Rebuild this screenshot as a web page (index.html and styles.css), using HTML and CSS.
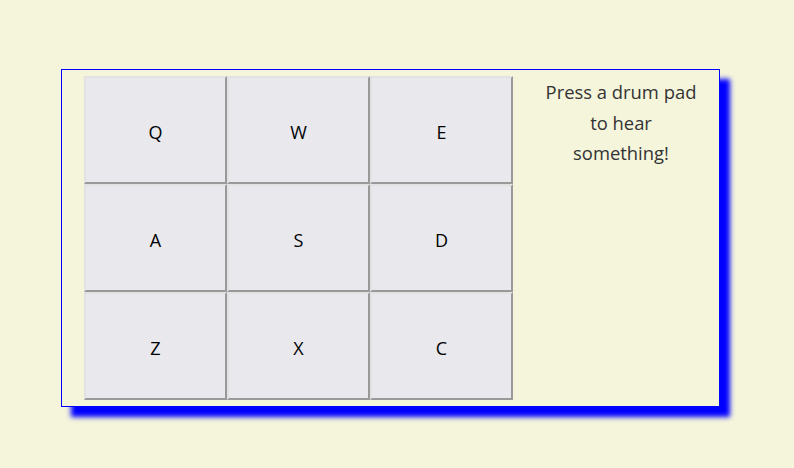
FILE: index.html
```html
<!DOCTYPE html>
<html>
<head>
<meta charset="utf-8">
<link rel="stylesheet" href="styles.css">
</head>
<body>
<div class="machine">
  <div class="pads">
    <button class="pad">Q</button>
    <button class="pad">W</button>
    <button class="pad">E</button>
    <button class="pad">A</button>
    <button class="pad">S</button>
    <button class="pad">D</button>
    <button class="pad">Z</button>
    <button class="pad">X</button>
    <button class="pad">C</button>
  </div>
  <div class="display">Press a drum pad to hear something!</div>
</div>
</body>
</html>
```
FILE: styles.css
```css
html, body {
  margin: 0;
  padding: 0;
  background: #f5f5dc;
  font-family: "Open Sans", "Noto Sans", sans-serif;
}
body {
  padding: 69px 0 61px 61px;
  min-height: 468px;
  box-sizing: border-box;
}
.machine {
  box-sizing: border-box;
  width: 659px;
  height: 338px;
  border: 1px solid #0000ff;
  box-shadow: 10px 10px 5px #0000ff;
  display: flex;
  padding: 6px 0 0 22px;
}
.pads {
  display: grid;
  grid-template-columns: repeat(3, 143px);
  grid-template-rows: repeat(3, 108px);
}
.pad {
  box-sizing: border-box;
  margin: 0;
  background: #e8e8ed;
  border-width: 2px;
  border-style: solid;
  border-color: #e2e2e2 #999999 #999999 #e2e2e2;
  font-family: "Open Sans", "Noto Sans", sans-serif;
  font-size: 18px;
  color: #000;
  padding: 3px 0 0 0;
}
.display {
  flex: 1;
  margin-top: 1px;
  padding: 0 22px 0 32px;
  text-align: center;
  font-size: 18.4px;
  line-height: 30.5px;
  color: #333;
}
```
